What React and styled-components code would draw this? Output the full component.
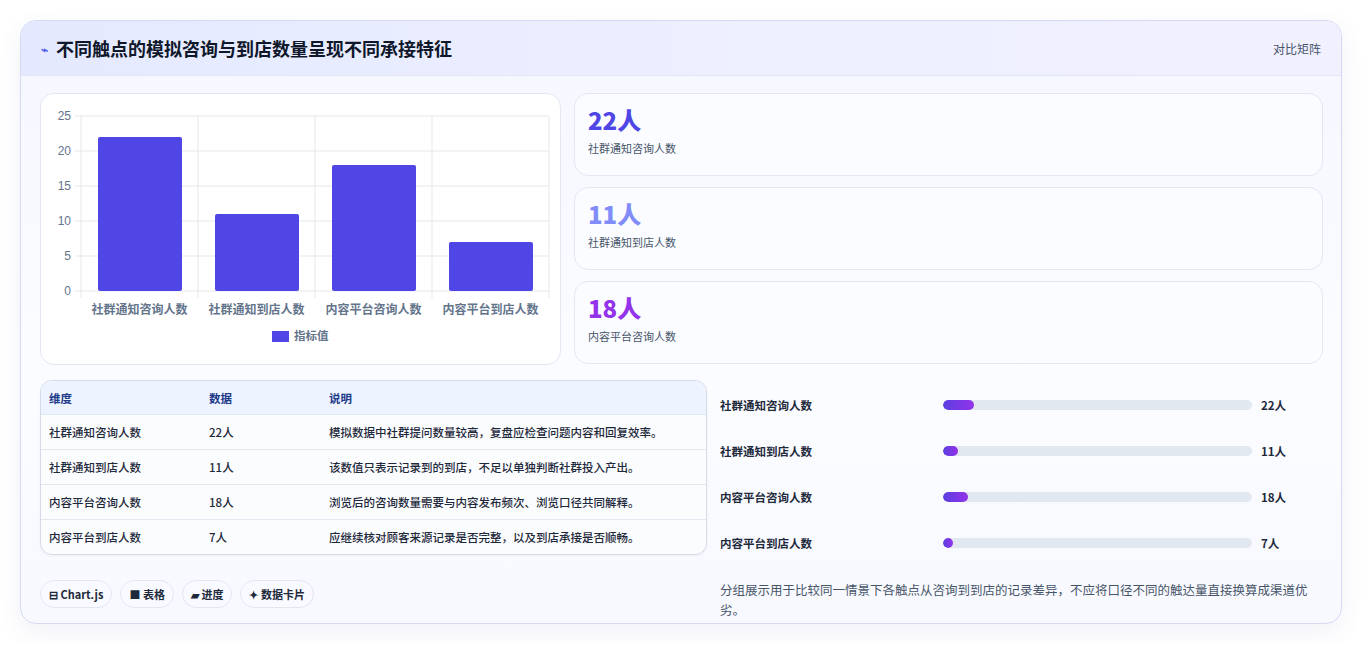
import React from "react";
import styled, { createGlobalStyle } from "styled-components";

const Global = createGlobalStyle`
  html,body{margin:0;padding:0;background:#fff;}
  body{font-family:"Noto Sans CJK SC","Noto Sans",sans-serif;color:#1e293b;}
  *{box-sizing:border-box;}
`;
const Page = styled.div`padding:20px 20px 20px 20px;`;
const Card = styled.div`
  width:1322px;height:604px;border:1px solid #d5d9f3;border-radius:16px;overflow:hidden;
  background:linear-gradient(180deg,#f5f7ff 0%,#fbfcff 60%,#f8f9ff 100%);
  box-shadow:0 8px 24px rgba(80,80,160,0.08);
`;
const Header = styled.div`
  height:55px;display:flex;align-items:center;justify-content:space-between;padding:0 20px;
  background:linear-gradient(90deg,#e4e9ff,#eef0ff 60%,#f1f0ff);border-bottom:1px solid #e2e6f5;
`;
const Title = styled.h1`margin:0;font-size:18px;font-weight:700;color:#0f172a;display:flex;align-items:center;gap:8px;`;
const Bolt = styled.span`color:#4f5ee6;font-size:12px;`;
const Tag = styled.span`font-size:12px;color:#475569;`;
const Body = styled.div`padding:17px 19px;display:flex;flex-direction:column;gap:15px;`;
const Row = styled.div`display:flex;gap:13px;`;
const ChartPanel = styled.div`width:521px;height:272px;background:#fff;border:1px solid #e3e7f2;border-radius:14px;`;
const Stats = styled.div`flex:1;display:flex;flex-direction:column;gap:11px;margin-right:-1px;`;
const Stat = styled.div`height:83px;border:1px solid #e3e7f2;border-radius:14px;background:#fbfcff;padding:10px 13px;`;
const StatNum = styled.div`font-size:24px;font-weight:800;line-height:32px;color:${p=>p.c};`;
const StatLabel = styled.div`font-size:11px;color:#475569;margin-top:4px;`;
const Bottom = styled.div`display:flex;gap:13px;`;
const Left = styled.div`width:667px;display:flex;flex-direction:column;gap:25px;`;
const Table = styled.div`border:1px solid #d6dbe8;border-radius:12px;overflow:hidden;background:#fbfcfe;box-shadow:0 1px 3px rgba(0,0,0,0.05);`;
const TR = styled.div`display:grid;grid-template-columns:160px 120px 1fr;height:${p=>p.h||35}px;align-items:center;padding-left:8px;
  font-size:11.5px;background:${p=>p.head?"#eef4ff":"transparent"};color:${p=>p.head?"#1e3a8a":"#1e293b"};font-weight:${p=>p.head?600:500};
  border-top:${p=>p.first?"none":"1px solid #e2e8f0"};`;
const Chips = styled.div`display:flex;gap:8px;`;
const Chip = styled.span`height:28px;padding:0 8px;border:1px solid #e2e6ef;border-radius:14px;background:#f8faff;font-size:11px;font-weight:600;color:#1e293b;display:flex;align-items:center;gap:3px;`;
const Right = styled.div`flex:1;display:flex;flex-direction:column;padding-top:2px;`;
const PRow = styled.div`height:46px;display:flex;align-items:center;font-size:11.5px;font-weight:600;color:#1e293b;`;
const PLabel = styled.div`width:223px;`;
const Track = styled.div`width:309px;height:10px;border-radius:5px;background:#e2e8f0;overflow:hidden;`;
const Fill = styled.div`height:100%;border-radius:5px;background:linear-gradient(90deg,#5b3fe0,#9333ea);`;
const PVal = styled.div`margin-left:9px;`;
const Note = styled.p`margin:14px 0 0;font-size:12.5px;line-height:20px;color:#475569;padding-right:10px;`;

const names=["社群通知咨询人数","社群通知到店人数","内容平台咨询人数","内容平台到店人数"];
const vals=[22,11,18,7];
const descs=["模拟数据中社群提问数量较高，复盘应检查问题内容和回复效率。","该数值只表示记录到的到店，不足以单独判断社群投入产出。","浏览后的咨询数量需要与内容发布频次、浏览口径共同解释。","应继续核对顾客来源记录是否完整，以及到店承接是否顺畅。"];

function Chart(){
  const x0=40,w=468,top=22,y0=197,u=7;
  return <svg width="521" height="272" style={{display:"block"}}>
    {[0,5,10,15,20,25].map(t=>{const y=y0-t*u;return <g key={t}>
      <line x1={x0-6} x2={x0+w} y1={y} y2={y} stroke="#e5e7eb"/>
      <text x={x0-10} y={y+4} textAnchor="end" fontSize="12" fill="#64748b" fontFamily="Liberation Sans,sans-serif">{t}</text></g>})}
    {[0,1,2,3,4].map(i=><line key={i} x1={x0+i*117} x2={x0+i*117} y1={top} y2={y0+7} stroke="#e5e7eb"/>)}
    {vals.map((v,i)=><rect key={i} x={x0+i*117+17} y={y0-v*u} width="84" height={v*u} rx="2" fill="#4f46e5"/>)}
    {names.map((n,i)=><text key={i} x={x0+i*117+58.5} y={220} textAnchor="middle" fontSize="12" fill="#64748b" fontWeight="600">{n}</text>)}
    <rect x="231" y="237" width="17" height="11" fill="#4f46e5"/>
    <text x="253" y="246" fontSize="11.5" fill="#64748b" fontWeight="600">指标值</text>
  </svg>;
}

export default function App(){
  return <Page><Global/><Card>
    <Header><Title><Bolt>⌁</Bolt>不同触点的模拟咨询与到店数量呈现不同承接特征</Title><Tag>对比矩阵</Tag></Header>
    <Body>
      <Row>
        <ChartPanel><Chart/></ChartPanel>
        <Stats>
          <Stat><StatNum c="#4f46e5">22人</StatNum><StatLabel>社群通知咨询人数</StatLabel></Stat>
          <Stat><StatNum c="#818cf8">11人</StatNum><StatLabel>社群通知到店人数</StatLabel></Stat>
          <Stat><StatNum c="#9333ea">18人</StatNum><StatLabel>内容平台咨询人数</StatLabel></Stat>
        </Stats>
      </Row>
      <Bottom>
        <Left>
          <Table>
            <TR head first h={33}><span>维度</span><span>数据</span><span>说明</span></TR>
            {names.map((n,i)=><TR key={i}><span>{n}</span><span>{vals[i]}人</span><span>{descs[i]}</span></TR>)}
          </Table>
          <Chips><Chip>⊟ Chart.js</Chip><Chip>■ 表格</Chip><Chip>▰ 进度</Chip><Chip>✦ 数据卡片</Chip></Chips>
        </Left>
        <Right>
          {names.map((n,i)=><PRow key={i}><PLabel>{n}</PLabel><Track><Fill style={{width:`${vals[i]/220*100}%`}}/></Track><PVal>{vals[i]}人</PVal></PRow>)}
          <Note>分组展示用于比较同一情景下各触点从咨询到到店的记录差异，不应将口径不同的触达量直接换算成渠道优劣。</Note>
        </Right>
      </Bottom>
    </Body>
  </Card></Page>;
}
